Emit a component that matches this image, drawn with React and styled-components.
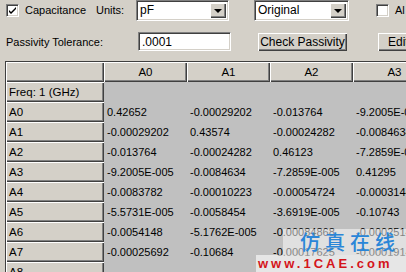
import React from 'react';
import styled, { createGlobalStyle } from 'styled-components';

const GlobalStyle = createGlobalStyle`
  html, body {
    margin: 0;
    padding: 0;
    background: #d4d0c8;
  }
`;

const Window = styled.div`
  position: relative;
  width: 406px;
  height: 272px;
  overflow: hidden;
  background: #d4d0c8;
  font-family: "Liberation Sans", Arial, sans-serif;
  font-size: 11px;
  color: #000;
`;

const Toolbar = styled.div`
  display: flex;
  flex-direction: column;
  gap: 12px;
  padding: 0 0 0 6px;
  height: 61px;
  box-sizing: border-box;
`;

const Row = styled.div`
  display: flex;
  align-items: center;
  height: ${p => p.h}px;
  white-space: nowrap;
`;

const Label = styled.span`
  width: ${p => p.w}px;
  flex: none;
  margin-left: ${p => p.ml || 0}px;
`;

const Check = styled.span`
  width: 11px;
  height: 11px;
  flex: none;
  background: #fff;
  border-top: 1px solid #808080;
  border-left: 1px solid #808080;
  border-right: 1px solid #fff;
  border-bottom: 1px solid #fff;
  box-shadow: inset 1px 1px 0 #404040, inset -1px -1px 0 #d4d0c8;
  margin-left: ${p => p.ml || 0}px;
  margin-right: 6px;
  display: flex;
  align-items: center;
  justify-content: center;
`;

const Field = styled.div`
  width: ${p => p.w}px;
  height: ${p => p.h || 19}px;
  flex: none;
  margin-left: ${p => p.ml || 0}px;
  box-sizing: border-box;
  background: #fff;
  border-top: 1px solid #808080;
  border-left: 1px solid #808080;
  border-right: 1px solid #fff;
  border-bottom: 1px solid #fff;
  box-shadow: inset 1px 1px 0 #404040, inset -1px -1px 0 #d4d0c8;
  display: flex;
  align-items: center;
  padding: 0 0 0 3px;
  font-size: 12px;
`;

const FieldText = styled.span`
  flex: 1;
`;

const DropButton = styled.span`
  width: 16px;
  align-self: stretch;
  margin: 2px 2px 2px 0;
  background: #d4d0c8;
  box-shadow: inset 1px 1px 0 #fff, inset -1px -1px 0 #404040, inset -2px -2px 0 #808080;
  display: flex;
  align-items: center;
  justify-content: center;
`;

const Arrow = styled.span`
  width: 0;
  height: 0;
  border-left: 4px solid transparent;
  border-right: 4px solid transparent;
  border-top: 4px solid #000;
  margin-top: 1px;
`;

const Button = styled.div`
  width: ${p => p.w}px;
  height: 18px;
  flex: none;
  margin-left: ${p => p.ml || 0}px;
  box-sizing: border-box;
  background: #d4d0c8;
  box-shadow: inset 1px 1px 0 #fff, inset -1px -1px 0 #404040, inset -2px -2px 0 #808080;
  display: flex;
  align-items: center;
  justify-content: ${p => (p.left ? 'flex-start' : 'center')};
  padding-left: ${p => (p.left ? 10 : 0)}px;
  font-size: 12px;
  overflow: hidden;
`;

const GridWrap = styled.div`
  margin-left: 5px;
  border-top: 1px solid #404040;
  border-left: 1px solid #404040;
  background: #c0c0c0;
  height: 220px;
`;

const Grid = styled.div`
  display: grid;
  grid-template-columns: 98px repeat(4, 83px);
  grid-auto-rows: 20px;
`;

const HeadCell = styled.div`
  background: #d4d0c8;
  box-shadow: inset 1px 1px 0 #fff, inset -1px -1px 0 #404040, inset -2px -2px 0 #808080;
  display: flex;
  align-items: center;
  justify-content: ${p => (p.center ? 'center' : 'flex-start')};
  padding-left: ${p => (p.center ? 0 : 3)}px;
  font-size: 11.5px;
  white-space: nowrap;
  overflow: hidden;
`;

const DataCell = styled.div`
  display: flex;
  align-items: center;
  padding-left: 3px;
  font-size: 11px;
  white-space: nowrap;
  overflow: hidden;
`;

const Stamp = styled.div`
  position: absolute;
  left: 256px;
  top: 229px;
  width: 150px;
  height: 43px;
  display: flex;
  flex-direction: column;
  align-items: flex-end;
`;

const StampTitle = styled.div`
  width: 123px;
  height: 26px;
  box-sizing: border-box;
  padding-left: 17px;
  background: rgba(255, 255, 255, 0.5);
  font: 500 20px "Noto Sans CJK SC", sans-serif;
  color: #2a86d8;
  letter-spacing: 5px;
  line-height: 26px;
`;

const StampUrl = styled.div`
  width: 150px;
  height: 17px;
  box-sizing: border-box;
  padding-left: 2px;
  background: rgba(255, 255, 255, 0.6);
  font: bold 13px "Liberation Sans", Arial, sans-serif;
  color: #d4141a;
  letter-spacing: 3px;
  line-height: 17px;
`;

const cols = ['A0', 'A1', 'A2', 'A3'];
const rows = [
  ['A0', '0.42652', '-0.00029202', '-0.013764', '-9.2005E-005'],
  ['A1', '-0.00029202', '0.43574', '-0.00024282', '-0.0084634'],
  ['A2', '-0.013764', '-0.00024282', '0.46123', '-7.2859E-005'],
  ['A3', '-9.2005E-005', '-0.0084634', '-7.2859E-005', '0.41295'],
  ['A4', '-0.0083782', '-0.00010223', '-0.00054724', '-0.00031449'],
  ['A5', '-5.5731E-005', '-0.0058454', '-3.6919E-005', '-0.10743'],
  ['A6', '-0.0054148', '-5.1762E-005', '-0.00084868', '-0.00025145'],
  ['A7', '-0.00025692', '-0.10684', '-0.00017625', '-0.00019145'],
  ['A8', '', '', '', ''],
];

export default function App() {
  return (
    <Window>
      <GlobalStyle />
      <Toolbar>
        <Row h={20}>
          <Check>
            <svg width="9" height="9" viewBox="0 0 9 9">
              <path d="M1 4 L3 6 L8 1 L8 3 L3 8 L1 6 Z" fill="#000" />
            </svg>
          </Check>
          <Label w={71}>Capacitance</Label>
          <Label w={40}>Units:</Label>
          <Field w={93} h={21}>
            <FieldText>pF</FieldText>
            <DropButton><Arrow /></DropButton>
          </Field>
          <Field w={95} h={21} ml={25}>
            <FieldText>Original</FieldText>
            <DropButton><Arrow /></DropButton>
          </Field>
          <Check ml={27} />
          <Label w={20}>Al</Label>
        </Row>
        <Row h={19}>
          <Label w={132}>Passivity Tolerance:</Label>
          <Field w={93}>
            <FieldText>.0001</FieldText>
          </Field>
          <Button w={89} ml={27}>Check Passivity</Button>
          <Button w={40} ml={31} left>Edit</Button>
        </Row>
      </Toolbar>
      <GridWrap>
        <Grid>
          <HeadCell />
          {cols.map(c => (
            <HeadCell key={c} center>{c}</HeadCell>
          ))}
          <HeadCell>Freq: 1 (GHz)</HeadCell>
          {cols.map(c => (
            <DataCell key={'f' + c} />
          ))}
          {rows.map(r => (
            <React.Fragment key={r[0]}>
              <HeadCell>{r[0]}</HeadCell>
              {r.slice(1).map((v, i) => (
                <DataCell key={i}>{v}</DataCell>
              ))}
            </React.Fragment>
          ))}
        </Grid>
      </GridWrap>
      <Stamp>
        <StampTitle>仿真在线</StampTitle>
        <StampUrl>www.1CAE.com</StampUrl>
      </Stamp>
    </Window>
  );
}
